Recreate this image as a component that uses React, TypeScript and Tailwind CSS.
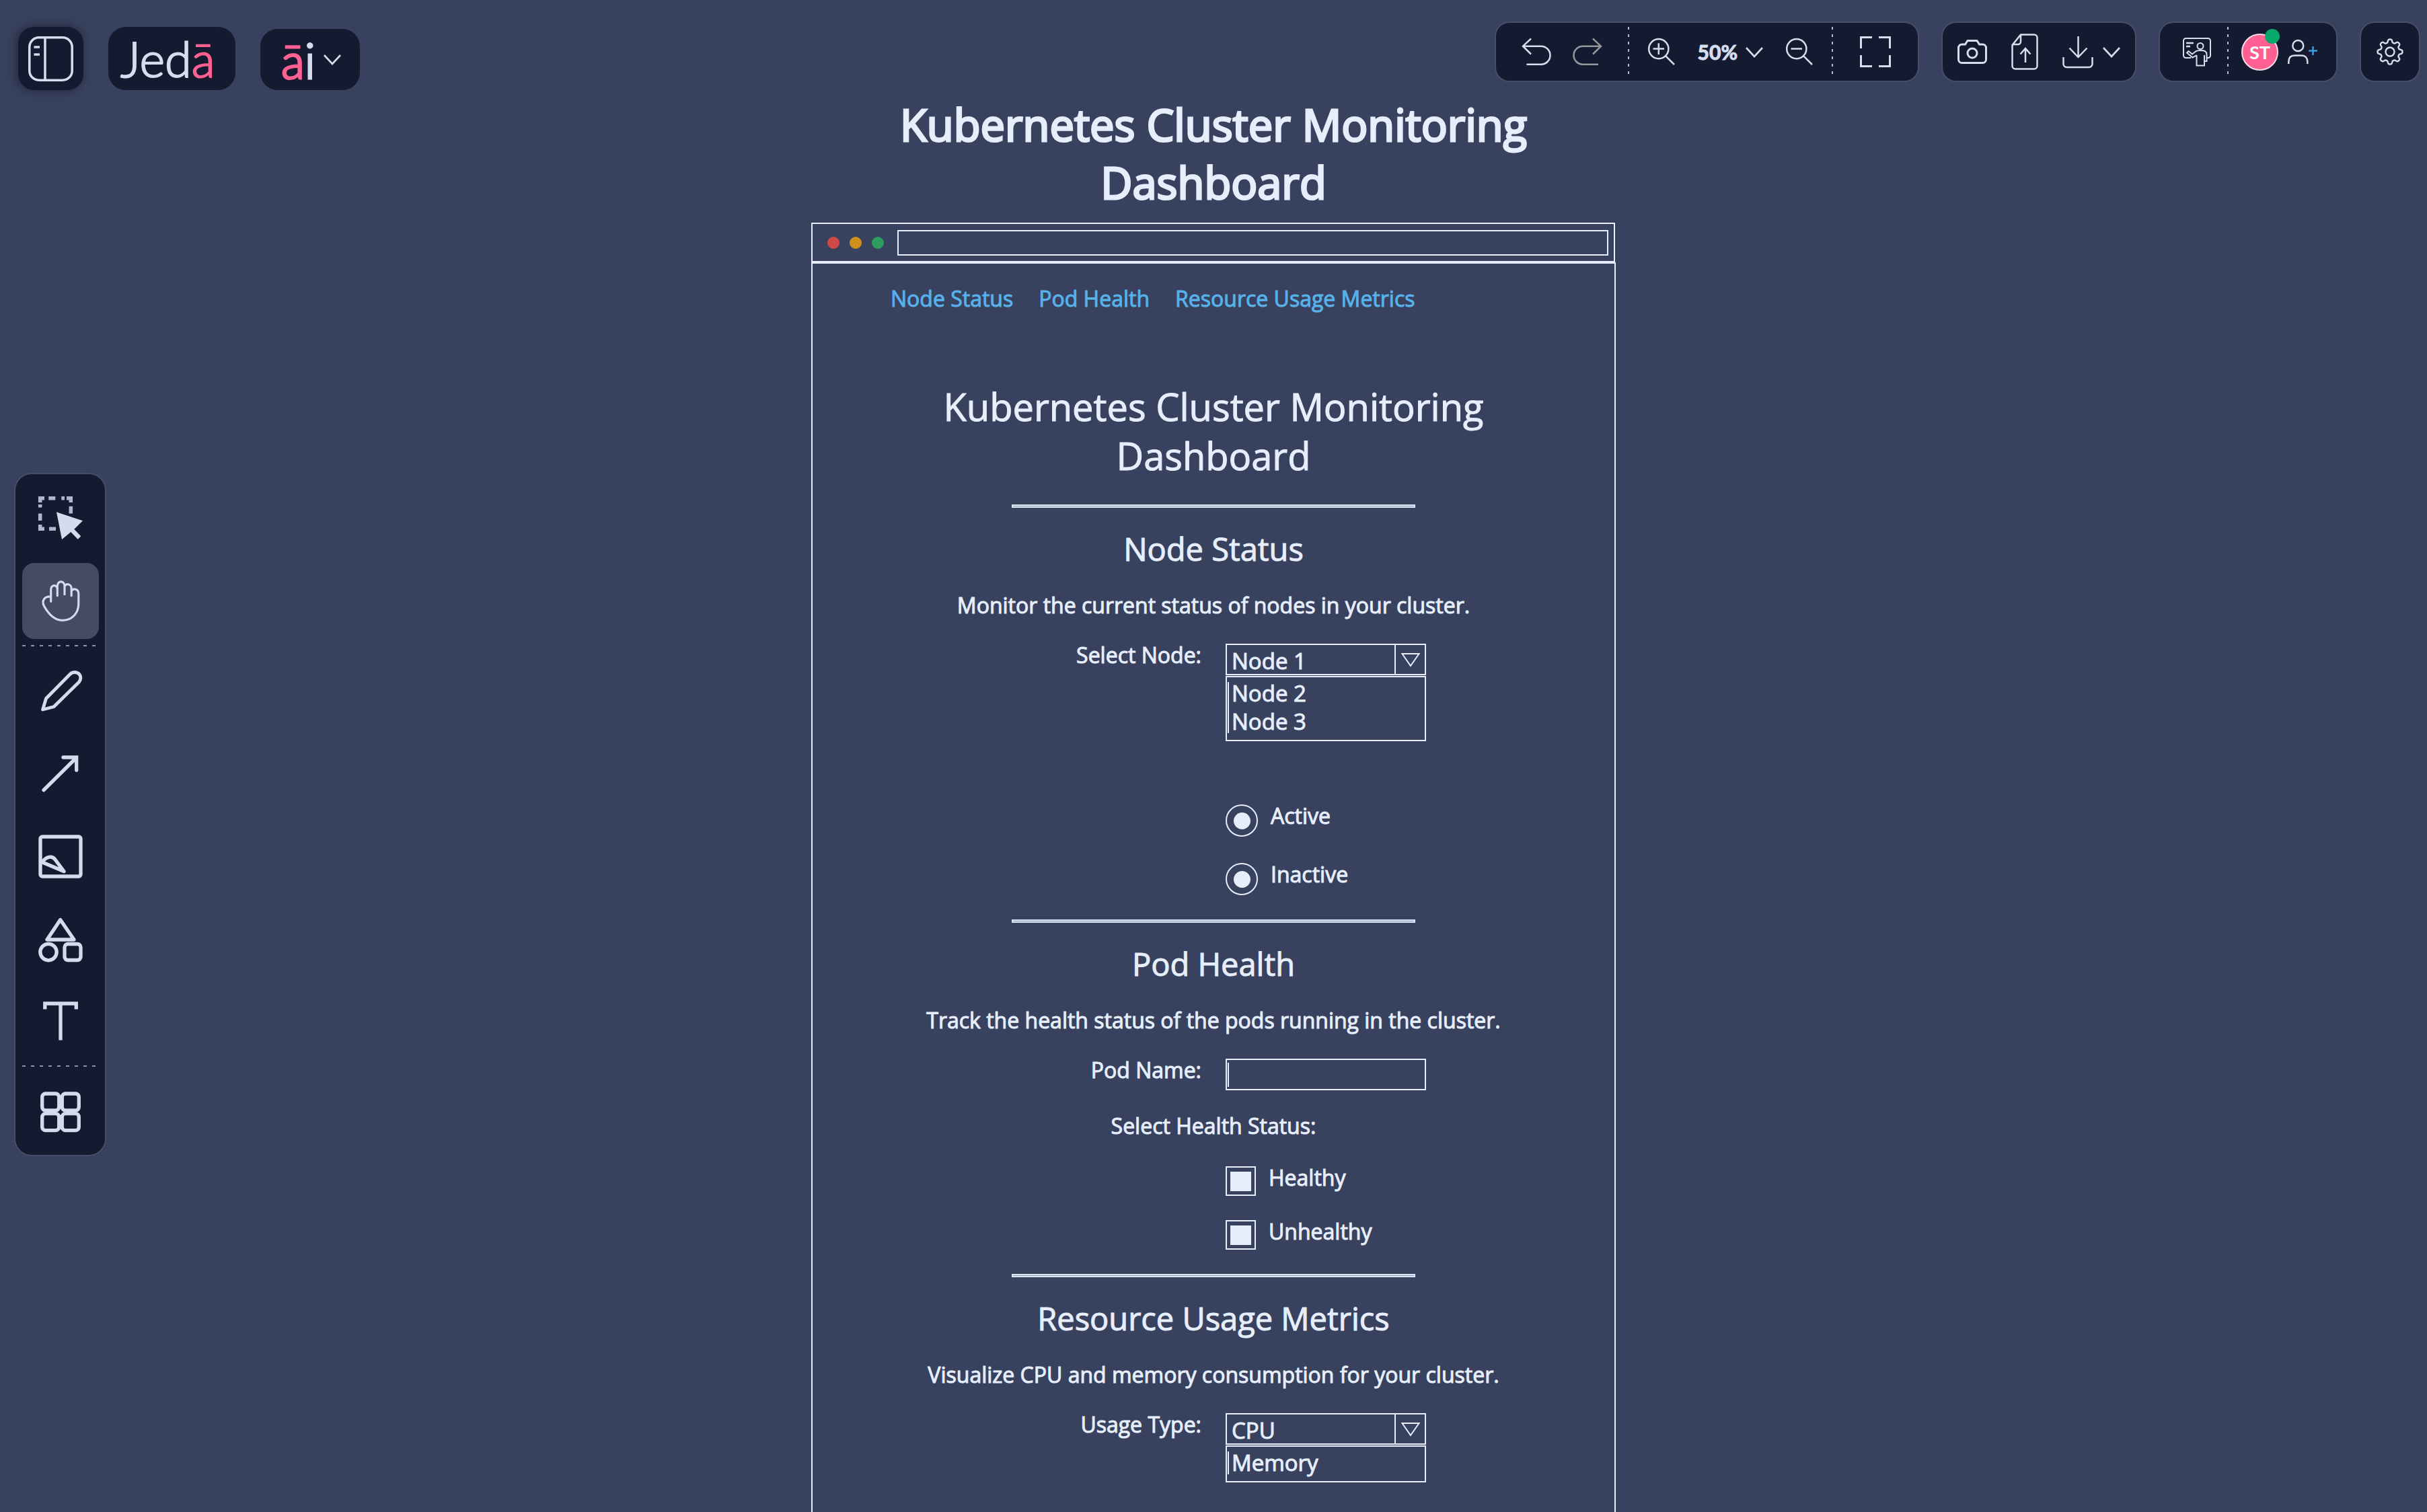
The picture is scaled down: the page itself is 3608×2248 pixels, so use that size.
import type { ReactNode } from "react";

const PANEL = "bg-[#141b30] ring-2 ring-[#474e69]";
const LINE = "border-[#e6eefc]";

// Gear outline with eight rounded teeth, centred in a 40x40 box
const GEAR_PATH =
  "M" +
  Array.from({ length: 160 }, (_, i) => {
    const angle = (i / 160) * Math.PI * 2;
    const radius = 16.2 + 2.4 * Math.tanh(1.8 * Math.cos(8 * angle));
    return `${(20 + radius * Math.sin(angle)).toFixed(2)} ${(20 - radius * Math.cos(angle)).toFixed(2)}`;
  }).join("L") +
  "Z";

type IconProps = {
  w: number;
  h: number;
  stroke?: number;
  className?: string;
  children: ReactNode;
};

function Icon({ w, h, stroke = 2.5, className = "", children }: IconProps) {
  return (
    <svg
      width={w}
      height={h}
      viewBox={`0 0 ${w} ${h}`}
      fill="none"
      stroke="currentColor"
      strokeWidth={stroke}
      className={`shrink-0 overflow-visible ${className}`}
      aria-hidden="true"
    >
      {children}
    </svg>
  );
}

function Chevron() {
  return (
    <Icon w={26} h={15} stroke={2.6}>
      <path d="M1 1L13 14L25 1" />
    </Icon>
  );
}

function VerticalDots() {
  return (
    <div className="h-[74px] w-[2px] bg-[repeating-linear-gradient(to_bottom,#b4bccd_0_4px,transparent_4px_11px)]" />
  );
}

function HorizontalDots() {
  return (
    <div className="h-[2px] w-[114px] bg-[repeating-linear-gradient(to_right,#8d95aa_0_5px,transparent_5px_13px)]" />
  );
}

function IconButton({ label, children }: { label: string; children: ReactNode }) {
  return (
    <button type="button" aria-label={label} className="flex items-center">
      {children}
    </button>
  );
}

function Header() {
  return (
    <header className="flex items-start justify-between pr-3 pl-[27px] text-[#d5ddef]">
      {/* Logo side */}
      <div className="flex items-end gap-[37px] pt-10">
        <button
          type="button"
          aria-label="Toggle sidebar"
          className="flex h-[94px] w-[97px] items-center justify-center rounded-3xl bg-[#141b30] shadow-[-2px_0_8px_4px_#2b3249]"
        >
          <Icon w={67} h={67} stroke={3.5}>
            <rect x="1.8" y="1.8" width="63.4" height="63.4" rx="14" />
            <path d="M25 2V65M8.5 16H17M8.5 27H17" />
          </Icon>
        </button>
        <a
          href="#"
          className="flex h-[94px] w-[189px] items-center rounded-[26px] bg-[#141b30] pl-[18px] font-['Lato',sans-serif] text-[72px] leading-none font-light [-webkit-text-stroke:2px]"
        >
          <span>
            Jed<span className="text-[#ff6192]">ā</span>
          </span>
        </a>
        <button
          type="button"
          className="flex h-[91px] w-[148px] items-center gap-3 rounded-[26px] bg-[#141b30] pl-[31px] font-['Lato',sans-serif] text-[72px] leading-none font-light"
        >
          <span className="[-webkit-text-stroke:3px]">
            <span className="text-[#ff6192]">ā</span>i
          </span>
          <Chevron />
        </button>
      </div>

      {/* Canvas actions */}
      <div className="flex gap-[37px] pt-[34px]">
        <div className={`flex h-[86px] items-center rounded-[20px] ${PANEL}`}>
          <div className="flex items-center gap-9 px-9">
            <IconButton label="Undo">
              <Icon w={44} h={44}>
                <path d="M16 2.5L4 13.7L16 25.5M4 13.7H31a13.5 13.5 0 0 1 0 27H9.5" />
              </Icon>
            </IconButton>
            <IconButton label="Redo">
              <Icon w={44} h={44} className="text-[#94979c]">
                <path d="M28 2.5L40 13.7L28 25.5M40 13.7H13a13.5 13.5 0 0 0 0 27H36" />
              </Icon>
            </IconButton>
          </div>
          <VerticalDots />
          <div className="flex items-center gap-[34px] px-7">
            <IconButton label="Zoom in">
              <Icon w={40} h={40}>
                <circle cx="15.8" cy="15.6" r="14.6" />
                <path d="M26.3 26.3L39 39M7.5 15.6H24M15.8 7.3V24" />
              </Icon>
            </IconButton>
            <button
              type="button"
              className="flex items-center gap-3 font-['Lato',sans-serif] text-[30px] leading-none font-bold"
            >
              <span className="[-webkit-text-stroke:1px]">50%</span>
              <Chevron />
            </button>
            <IconButton label="Zoom out">
              <Icon w={40} h={40}>
                <circle cx="15.8" cy="15.6" r="14.6" />
                <path d="M26.3 26.3L39 39M7.5 15.6H24" />
              </Icon>
            </IconButton>
          </div>
          <VerticalDots />
          <div className="flex items-center px-10">
            <IconButton label="Full screen">
              <Icon w={46} h={46} stroke={3}>
                <path d="M1.5 18V1.5H18M28 1.5H44.5V18M44.5 28V44.5H28M18 44.5H1.5V28" />
              </Icon>
            </IconButton>
          </div>
        </div>

        <div className={`flex h-[86px] items-center gap-9 rounded-[20px] px-[22px] ${PANEL}`}>
          <IconButton label="Take snapshot">
            <Icon w={44} h={36} stroke={3}>
              <path d="M15 1.5h14l3.5 5.5h5a5 5 0 0 1 5 5v17.5a5 5 0 0 1-5 5h-31a5 5 0 0 1-5-5V12a5 5 0 0 1 5-5h5z" />
              <circle cx="22" cy="20" r="7" />
            </Icon>
          </IconButton>
          <IconButton label="Upload file">
            <Icon w={40} h={54}>
              <path d="M14 1.5H34a4.5 4.5 0 0 1 4.5 4.5V48a4.5 4.5 0 0 1-4.5 4.5H6A4.5 4.5 0 0 1 1.5 48V17Z" />
              <path d="M14 2V12a4 4 0 0 1-4 4H2M21 43V22M13.5 30.5L21 22L28.5 30.5" />
            </Icon>
          </IconButton>
          <button type="button" aria-label="Download" className="flex items-center gap-3.5">
            <Icon w={46} h={47}>
              <path d="M1.5 31V41a5 5 0 0 0 5 5h33a5 5 0 0 0 5-5V31M23.5 0V31M10.5 17.5L23.5 31L36.5 17.5" />
            </Icon>
            <Chevron />
          </button>
        </div>

        <div className={`flex h-[86px] items-center rounded-[20px] ${PANEL}`}>
          <div className="flex pr-6 pl-[34px]">
            <IconButton label="Present">
              <Icon w={42} h={42} stroke={2}>
                <path d="M12 30H4.5A3.5 3.5 0 0 1 1 26.5V4.5A3.5 3.5 0 0 1 4.5 1H37.5A3.5 3.5 0 0 1 41 4.5V26.500A3.5 3.5 0 0 1 37.5 30H36" />
                <path d="M5 8H16M5 13H11" strokeWidth={2.5} />
                <circle cx="26" cy="12.5" r="4.5" />
                <path d="M20.5 26L14.5 29.5L6 22.5L8.5 20L14 24.5L19 20.5C21 19 23 19 26 19C33 19 35.5 20.5 35.5 25V35H32V41.5H20.5V26M32 35V26" />
              </Icon>
            </IconButton>
          </div>
          <VerticalDots />
          <div className="flex items-center gap-3.5 pr-7 pl-[19px]">
            <button
              type="button"
              className="relative flex size-[55px] items-center justify-center rounded-full border-2 border-[#f6dfe8] bg-[#ff5f92] font-['Lato',sans-serif] text-[27px] leading-none font-bold text-white"
            >
              ST
              <span className="absolute -top-[9px] -right-1 size-[22px] rounded-full bg-[#08a86b]" />
            </button>
            <IconButton label="Invite people">
              <Icon w={44} h={36}>
                <circle cx="15.3" cy="9" r="8" />
                <path d="M1.3 36V33C1.3 26 5 23.5 10 23.5H20.5C26 23.5 29.3 27 29.3 33V36" />
                <path d="M31 16.5H44M37.5 10V23" stroke="#3c9bdc" />
              </Icon>
            </IconButton>
          </div>
        </div>

        <button
          type="button"
          aria-label="Settings"
          className={`flex size-[86px] items-center justify-center rounded-[20px] ${PANEL}`}
        >
          <Icon w={40} h={40} stroke={2.4}>
            <path d={GEAR_PATH} strokeLinejoin="round" />
            <circle cx="20" cy="20" r="6.5" />
          </Icon>
        </button>
      </div>
    </header>
  );
}

function Tool({ label, active, children }: { label: string; active?: boolean; children: ReactNode }) {
  return (
    <button
      type="button"
      aria-label={label}
      aria-pressed={!!active}
      className={`rounded-[18px] ${active ? "bg-[#444c65]" : ""}`}
    >
      <Icon w={114} h={113} stroke={5.3}>
        {children}
      </Icon>
    </button>
  );
}

function Toolbar() {
  return (
    <aside
      className={`mt-[571px] ml-[23px] flex w-[133px] flex-col items-center gap-[9px] self-start justify-self-start rounded-3xl py-[9px] text-[#d3dcee] ${PANEL}`}
    >
      <div className="flex flex-col gap-2.5">
        <Tool label="Select">
          <path
            stroke="#aeb7cc"
            strokeWidth={5.5}
            d="M33 26.7H26.7V33M39.3 26.7H49.3M58.3 26.7H63M66 26.7H72.3V33M26.7 36V40.5M26.7 49.5V60M26.7 66V72.3H33M72.3 38.7V49.5M40 72.3H50"
          />
          <path
            fill="currentColor"
            stroke="none"
            d="M51 47.3L90 60.3L77.3 72.7L87.3 83.3L82.7 87.7L72.3 77L59 88Z"
          />
        </Tool>
        <Tool label="Hand" active>
          <path
            strokeWidth={3.2}
            strokeLinecap="round"
            strokeLinejoin="round"
            d="M42.7 57.3V39.5C42.7 32 52.3 31.5 52.3 39M52.3 48.7V35C52.3 25.5 63 25.5 63 35V46.7M63 36C63 30 73.2 30 73.2 38V48.7M73.2 41.5C76 37.5 83.8 38 83.8 46V60C83.8 75 74 85.3 60 85.3C46 85.3 38 74 32.5 64C28.5 56 33 49.5 42.5 50"
          />
        </Tool>
      </div>
      <HorizontalDots />
      <div className="flex flex-col gap-2.5">
        <Tool label="Pen">
          <path
            strokeLinejoin="round"
            strokeWidth={4.8}
            d="M30.5 85L35.5 68.5L71 32.5C75 28.5 81 28.5 85 32.5C87.5 36 87.5 40 84.5 44L47 80.7Z"
          />
        </Tool>
        <Tool label="Arrow">
          <path strokeLinecap="round" d="M32 81.7L79 35M61 33H80.7V52" />
        </Tool>
        <Tool label="Image">
          <rect x="27" y="28" width="60" height="59" rx="3" />
          <path strokeLinejoin="round" d="M30 66C35 57 45 56 49 62L62 79.5Z" />
        </Tool>
        <Tool label="Shapes">
          <path strokeLinejoin="round" d="M56.7 28.5L37 58H77Z" />
          <circle cx="39" cy="76.6" r="12.2" />
          <rect x="63" y="64.5" width="24" height="24" rx="5" />
        </Tool>
        <Tool label="Text">
          <path d="M33.8 38.5V30H80.3V38.5M57 30V84.5" />
        </Tool>
      </div>
      <HorizontalDots />
      <Tool label="Templates">
        <rect x="29.7" y="31" width="25" height="25" rx="5" />
        <rect x="59.3" y="31" width="25" height="25" rx="5" />
        <rect x="29.7" y="60.7" width="25" height="25" rx="5" />
        <rect x="59.3" y="60.7" width="25" height="25" rx="5" />
      </Tool>
    </aside>
  );
}

function SectionHeading({ title, text }: { title: string; text: string }) {
  return (
    <>
      <hr className="mx-auto mt-9 h-[5px] w-[600px] border-2 border-[#dde6f5] bg-[#8f99b3]" />
      <h3 className="mt-7 text-center text-[47px] leading-[66px]">{title}</h3>
      <p className="mt-[27px] text-center">{text}</p>
    </>
  );
}

function Row({ label, htmlFor, children }: { label?: string; htmlFor?: string; children: ReactNode }) {
  return (
    <div className="grid grid-cols-2 items-start gap-9">
      {label ? (
        <label htmlFor={htmlFor} className="text-right">
          {label}
        </label>
      ) : (
        <span />
      )}
      {children}
    </div>
  );
}

function Dropdown({ id, value, options }: { id: string; value: string; options: string[] }) {
  return (
    <div className="w-[298px] pt-[7px] text-[33px]">
      <div className={`flex h-[47px] border-2 ${LINE}`}>
        <select id={id} defaultValue={value} className="min-w-0 flex-1 appearance-none bg-transparent pl-[7px]">
          <option>{value}</option>
          {options.map((option) => (
            <option key={option}>{option}</option>
          ))}
        </select>
        <span className={`flex w-[45px] items-center justify-center border-l-2 ${LINE}`}>
          <Icon w={28} h={20} stroke={2}>
            <path d="M1.5 1H26.5L14 19Z" />
          </Icon>
        </span>
      </div>
      <div className={`mt-px border-2 pt-[3px] pb-[6px] pl-px ${LINE}`}>
        <ul className="relative pl-[6px] leading-[42px] before:absolute before:inset-y-1 before:left-0 before:w-[2px] before:bg-[#e6eefc]">
          {options.map((option) => (
            <li key={option}>{option}</li>
          ))}
        </ul>
      </div>
    </div>
  );
}

function Choice({ type, name, label }: { type: "radio" | "checkbox"; name: string; label: string }) {
  const shape =
    type === "radio"
      ? "size-12 rounded-full before:size-[25px] before:rounded-full"
      : "h-[44px] w-[45px] before:h-[29px] before:w-[31px]";
  return (
    <label className="flex items-start gap-[19px]">
      <input
        type={type}
        name={name}
        defaultChecked
        className={`mt-[7px] flex shrink-0 appearance-none items-center justify-center border-2 before:bg-[#e6eefc] before:content-[''] ${LINE} ${shape}`}
      />
      {label}
    </label>
  );
}

export default function App() {
  return (
    <div className="h-screen overflow-hidden bg-[#38415d] font-['Open_Sans',sans-serif] text-[32px] leading-[48px] text-[#e6eefc]">
      <Header />
      <div className="grid grid-cols-[1fr_minmax(0,1196px)_1fr]">
        <Toolbar />
        <main className="pt-2 [-webkit-text-stroke:1px]">
          <h1 className="mx-auto max-w-[1000px] text-center text-[65px] leading-[86px] [-webkit-text-stroke:3px]">
            Kubernetes Cluster Monitoring Dashboard
          </h1>

          {/* Browser frame */}
          <div className={`mt-[17px] mr-px flex h-[59px] items-center border-2 pr-2 pl-[22px] ${LINE}`}>
            <div className="flex gap-[15px]">
              <span className="size-[18px] rounded-full bg-[#cf4a46]" />
              <span className="size-[18px] rounded-full bg-[#cf8f1c]" />
              <span className="size-[18px] rounded-full bg-[#2d9c5f]" />
            </div>
            <input aria-label="Address" className={`ml-5 h-[38px] min-w-0 flex-1 border-2 ${LINE}`} />
          </div>

          <div className={`border-2 pt-7 pb-24 ${LINE}`}>
            <nav className="flex gap-[38px] pl-[116px] text-[#57b1ea]">
              <a href="#node">Node Status</a>
              <a href="#pod">Pod Health</a>
              <a href="#usage">Resource Usage Metrics</a>
            </nav>

            <h2 className="mx-auto mt-[100px] max-w-[900px] text-center text-[56px] leading-[73px]">
              Kubernetes Cluster Monitoring Dashboard
            </h2>

            <section id="node">
              <SectionHeading title="Node Status" text="Monitor the current status of nodes in your cluster." />
              <div className="mt-[26px]">
                <Row label="Select Node:" htmlFor="node-select">
                  <Dropdown id="node-select" value="Node 1" options={["Node 2", "Node 3"]} />
                </Row>
              </div>
              <div className="mt-[87px] flex flex-col gap-8">
                <Row>
                  <Choice type="radio" name="active" label="Active" />
                </Row>
                <Row>
                  <Choice type="radio" name="inactive" label="Inactive" />
                </Row>
              </div>
            </section>

            <section id="pod">
              <SectionHeading title="Pod Health" text="Track the health status of the pods running in the cluster." />
              <div className="mt-[26px] flex flex-col gap-[29px]">
                <Row label="Pod Name:" htmlFor="pod-name">
                  <div className="relative w-[298px] pt-[7px]">
                    <input id="pod-name" className={`block h-[47px] w-full border-2 ${LINE}`} />
                    <span className="absolute bottom-[5px] left-[3px] h-9 w-[2px] bg-[#e6eefc]" />
                  </div>
                </Row>
                <p className="text-center">Select Health Status:</p>
                <Row>
                  <Choice type="checkbox" name="healthy" label="Healthy" />
                </Row>
                <Row>
                  <Choice type="checkbox" name="unhealthy" label="Unhealthy" />
                </Row>
              </div>
            </section>

            <section id="usage">
              <SectionHeading
                title="Resource Usage Metrics"
                text="Visualize CPU and memory consumption for your cluster."
              />
              <div className="mt-[26px]">
                <Row label="Usage Type:" htmlFor="usage-select">
                  <Dropdown id="usage-select" value="CPU" options={["Memory"]} />
                </Row>
              </div>
            </section>
          </div>
        </main>
      </div>
    </div>
  );
}
